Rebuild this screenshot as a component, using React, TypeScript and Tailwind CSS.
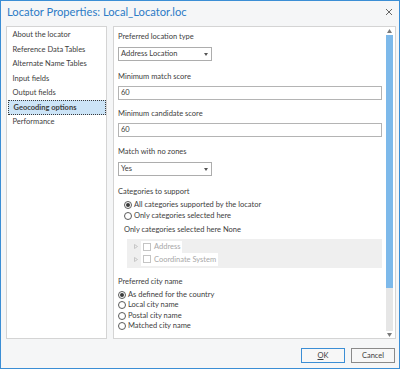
import React from 'react';

const navItems = [
  'About the locator',
  'Reference Data Tables',
  'Alternate Name Tables',
  'Input fields',
  'Output fields',
  'Geocoding options',
  'Performance',
];

const Radio = ({ checked }: { checked?: boolean }) => (
  <span className="w-[8px] h-[8px] rounded-full border border-[#5a5a5a] bg-white flex items-center justify-center shrink-0">
    {checked && <span className="w-[4px] h-[4px] rounded-full bg-[#3a3a3a]" />}
  </span>
);

const RadioRow = ({ label, checked }: { label: string; checked?: boolean }) => (
  <div className="flex items-center gap-[2px] h-[10.5px] leading-[10.5px]">
    <Radio checked={checked} />
    <span>{label}</span>
  </div>
);

const Select = ({ value }: { value: string }) => (
  <div className="w-[94px] h-[14px] border border-[#adadad] bg-white flex items-center justify-between pl-[2px] pr-[3px] leading-[12px]">
    <span>{value}</span>
    <svg width="4" height="3" viewBox="0 0 4 3">
      <path d="M0 0 L4 0 L2 3 Z" fill="#555" />
    </svg>
  </div>
);

const TextInput = ({ value }: { value: string }) => (
  <div className="mr-[3px] h-[14px] border border-[#b4b4b4] bg-white flex items-center pl-[2px] leading-[12px]">
    {value}
  </div>
);

const TreeRow = ({ label }: { label: string }) => (
  <div className="flex items-center h-[12.5px]">
    <svg width="4" height="5" viewBox="0 0 4 5" className="ml-[7px] mr-[3px]">
      <path d="M0.5 0.5 L3.5 2.5 L0.5 4.5 Z" fill="none" stroke="#bdbdbd" strokeWidth="0.8" />
    </svg>
    <div className="bg-white flex items-center h-full pl-[2px] pr-[2px] text-[#a8a8a8]">
      <span className="w-[8px] h-[8px] border border-[#c4c4c4] bg-white mr-[3px]" />
      <span>{label}</span>
    </div>
  </div>
);

export default function App() {
  return (
    <div className="w-[400px] h-[369px] border border-[#3b8ed5] bg-[#f5f6f7] flex flex-col font-['Lato',sans-serif] text-[7.5px] text-[#404040] overflow-hidden">
      {/* Title bar */}
      <div className="h-[25px] pb-[3px] flex items-center justify-between pl-[6px] pr-[6px]">
        <span className="text-[11.2px] text-[#2c7bc6] leading-none">Locator Properties: Local_Locator.loc</span>
        <svg width="8" height="8" viewBox="0 0 8 8">
          <path d="M1 1 L7 7 M7 1 L1 7" stroke="#666" strokeWidth="1" />
        </svg>
      </div>

      {/* Body */}
      <div className="h-[313px] flex pl-[5px] pr-[3px] gap-[6px]">
        {/* Sidebar */}
        <div className="w-[101px] border border-[#d4d4d4] bg-white pt-[0.5px] px-[0.5px]">
          {navItems.map((item) => {
            const selected = item === 'Geocoding options';
            return (
              <div
                key={item}
                className={`h-[14.5px] flex items-center pl-[5px] leading-none whitespace-nowrap ${
                  selected ? 'bg-[#cce4f7] border border-dotted border-[#3a3a3a] font-bold pl-[4px]' : ''
                }`}
              >
                {item}
              </div>
            );
          })}
        </div>

        {/* Options panel */}
        <div className="flex-1 border border-[#d4d4d4] bg-white flex">
          <div className="flex-1 pl-[4px] flex flex-col">
            <div className="mt-[4px] leading-[12px]">Preferred location type</div>
            <div className="mt-[4px]"><Select value="Address Location" /></div>

            <div className="mt-[10px] leading-[12px]">Minimum match score</div>
            <div className="mt-[3px]"><TextInput value="60" /></div>

            <div className="mt-[8px] leading-[12px]">Minimum candidate score</div>
            <div className="mt-[3px]"><TextInput value="60" /></div>

            <div className="mt-[9px] leading-[12px]">Match with no zones</div>
            <div className="mt-[4px]"><Select value="Yes" /></div>

            <div className="mt-[10px] leading-[12px]">Categories to support</div>
            <div className="mt-[2px] pl-[6px]">
              <RadioRow label="All categories supported by the locator" checked />
              <RadioRow label="Only categories selected here" />
              <div className="mt-[2.5px] leading-[12px]">Only categories selected here None</div>
              <div className="mt-[3px] mr-[3px] ml-[3px] bg-[#efefef] pt-[2px] pb-[2px]">
                <TreeRow label="Address" />
                <TreeRow label="Coordinate System" />
              </div>
            </div>

            <div className="mt-[8px] leading-[12px]">Preferred city name</div>
            <div className="mt-[2px]">
              <RadioRow label="As defined for the country" checked />
              <RadioRow label="Local city name" />
              <RadioRow label="Postal city name" />
              <RadioRow label="Matched city name" />
            </div>
          </div>

          {/* Scrollbar */}
          <div className="w-[9px] flex flex-col items-center pt-[2px] pb-[1px] mr-[1px]">
            <svg width="5" height="4" viewBox="0 0 5 4" className="shrink-0">
              <path d="M0 4 L2.5 0 L5 4 Z" fill="#7a7a7a" />
            </svg>
            <div className="flex-1 w-[7px] bg-[#e6e6e6] mt-[2px] mb-[2px] flex flex-col">
              <div className="h-[253px] w-full bg-[#7db9ea]" />
            </div>
            <svg width="5" height="4" viewBox="0 0 5 4" className="shrink-0">
              <path d="M0 0 L2.5 4 L5 0 Z" fill="#7a7a7a" />
            </svg>
          </div>
        </div>
      </div>

      {/* Footer */}
      <div className="flex justify-end gap-[6px] pr-[4px] mt-[9px]">
        <button className="w-[44px] h-[15px] border border-[#3b8ed5] bg-[#f7f7f7] text-[7.5px] leading-none text-[#404040]">
          <span className="underline">O</span>K
        </button>
        <button className="w-[44px] h-[15px] border border-[#8a8a8a] bg-[#f7f7f7] text-[7.5px] leading-none text-[#404040]">
          Cancel
        </button>
      </div>
    </div>
  );
}
